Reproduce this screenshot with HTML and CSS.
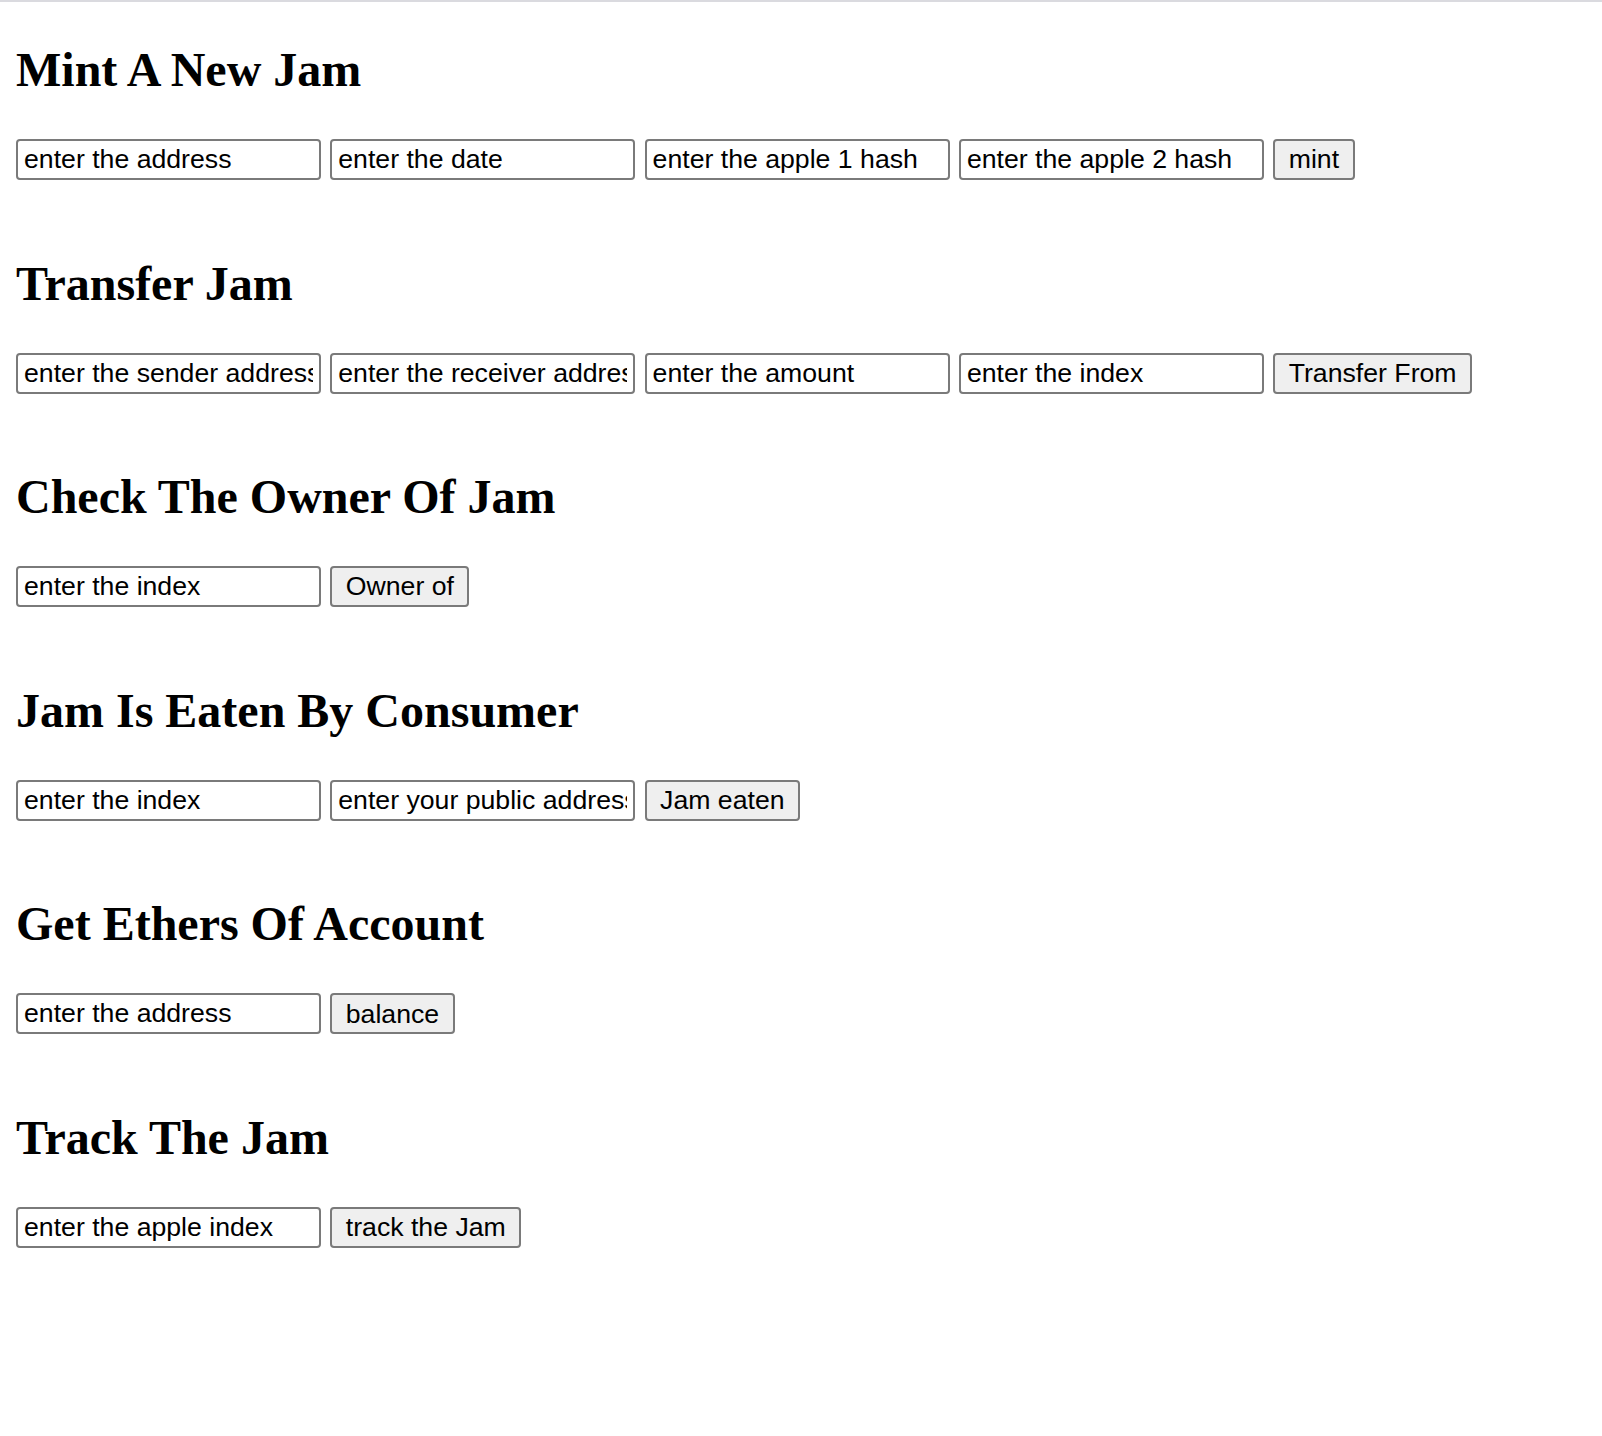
FILE: index.html
```html
<!DOCTYPE html>
<html>
<head>
<meta charset="utf-8">
<title>Jam</title>
<link rel="stylesheet" href="styles.css">
</head>
<body>
<div class="topline"></div>
<main class="page">
  <section class="block">
    <h2 class="title">Mint A New Jam</h2>
    <div class="row">
      <input class="field" type="text" placeholder="enter the address">
      <input class="field" type="text" placeholder="enter the date">
      <input class="field" type="text" placeholder="enter the apple 1 hash">
      <input class="field" type="text" placeholder="enter the apple 2 hash">
      <button class="btn" type="button">mint</button>
    </div>
  </section>
  <section class="block">
    <h2 class="title">Transfer Jam</h2>
    <div class="row">
      <input class="field" type="text" placeholder="enter the sender address">
      <input class="field" type="text" placeholder="enter the receiver address">
      <input class="field" type="text" placeholder="enter the amount">
      <input class="field" type="text" placeholder="enter the index">
      <button class="btn" type="button">Transfer From</button>
    </div>
  </section>
  <section class="block">
    <h2 class="title">Check The Owner Of Jam</h2>
    <div class="row">
      <input class="field" type="text" placeholder="enter the index">
      <button class="btn" type="button">Owner of</button>
    </div>
  </section>
  <section class="block">
    <h2 class="title">Jam Is Eaten By Consumer</h2>
    <div class="row">
      <input class="field" type="text" placeholder="enter the index">
      <input class="field" type="text" placeholder="enter your public address">
      <button class="btn" type="button">Jam eaten</button>
    </div>
  </section>
  <section class="block">
    <h2 class="title">Get Ethers Of Account</h2>
    <div class="row">
      <input class="field" type="text" placeholder="enter the address">
      <button class="btn" type="button">balance</button>
    </div>
  </section>
  <section class="block">
    <h2 class="title">Track The Jam</h2>
    <div class="row">
      <input class="field" type="text" placeholder="enter the apple index">
      <button class="btn" type="button">track the Jam</button>
    </div>
  </section>
</main>
</body>
</html>
```
FILE: styles.css
```css
html, body {
  margin: 0;
  padding: 0;
  background: #ffffff;
}

body {
  font-family: "Liberation Serif", "Times New Roman", serif;
  color: #000;
}

.topline {
  height: 2px;
  background: #dadadf;
}

.page {
  padding: 40px 16px 0;
}

.block {
  margin-bottom: 75.6px;
}

.title {
  margin: 0 0 42px;
  font-family: "Liberation Serif", "Times New Roman", serif;
  font-size: 48px;
  font-weight: bold;
  line-height: 55px;
}

.row {
  display: flex;
  align-items: center;
  gap: 9.3px;
  height: 41px;
}

.field {
  box-sizing: border-box;
  width: 305px;
  height: 41px;
  margin: 0;
  padding: 0 6px;
  border: 2px solid #7a7a7a;
  border-radius: 4px;
  background: #fff;
  font-family: "Liberation Sans", Arial, sans-serif;
  font-size: 26.67px;
  color: #000;
  outline: none;
}

.field::placeholder {
  color: #000;
  opacity: 1;
}

.btn {
  box-sizing: border-box;
  height: 41px;
  margin: 0;
  padding: 0 13.5px;
  border: 2px solid #7a7a7a;
  border-radius: 4px;
  background: #efefef;
  font-family: "Liberation Sans", Arial, sans-serif;
  font-size: 26.67px;
  color: #000;
  line-height: 1;
}
```
